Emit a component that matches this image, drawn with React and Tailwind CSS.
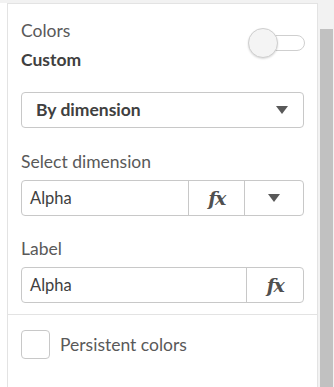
import React from 'react';

const Caret = () => (
  <svg width="12" height="8" viewBox="0 0 12 8" className="fill-[#595959]">
    <path d="M0 0 L12 0 L6 8 Z" />
  </svg>
);

const Fx = () => (
  <span className="font-['DejaVu_Serif',serif] italic font-bold text-[19px] leading-none text-[#505050] tracking-[-1.5px]">
    fx
  </span>
);

const App = () => {
  return (
    <div className="flex h-[387px] w-[334px] overflow-hidden bg-[#f2f2f2] font-['Lato',sans-serif]">
      <div className="flex w-[318px] flex-col pt-[3px]">
        <div className="flex flex-1 bg-white pl-[7px]">
          <div className="flex flex-1 flex-col border-l border-r border-t border-[#e3e3e3]">
            <div className="px-[13px] pt-[17px] pb-[11px]">
              <div className="flex justify-between">
                <div className="flex flex-col gap-[9px]">
                  <span className="text-[17.5px] leading-5 text-[#595959]">Colors</span>
                  <span className="text-[17.5px] font-bold leading-5 text-[#404040]">Custom</span>
                </div>
                <div className="relative mr-[-1px] mt-[7px] h-[30px] w-[57px]">
                  <div className="absolute left-[4px] top-[7px] h-[16px] w-[53px] rounded-full border border-[#cfcfcf] bg-white" />
                  <div className="absolute left-0 top-0 h-[30px] w-[30px] rounded-full border border-[#cfcfcf] bg-[#f4f4f4] shadow-[0_1px_2px_rgba(0,0,0,0.15)]" />
                </div>
              </div>

              <div className="mt-[22px] flex h-[36px] items-center justify-between rounded-[4px] border border-[#c8c8c8] pl-[14px] pr-[15px]">
                <span className="text-[17.5px] font-bold text-[#404040]">By dimension</span>
                <Caret />
              </div>

              <div className="mt-[24px] text-[17.5px] leading-5 text-[#595959]">Select dimension</div>
              <div className="mt-[8px] flex h-[36px] rounded-[4px] border border-[#c8c8c8]">
                <div className="flex flex-1 items-center pl-[8px] text-[16.5px] text-[#404040]">Alpha</div>
                <div className="flex w-[56px] items-center justify-center border-l border-[#c8c8c8]"><Fx /></div>
                <div className="flex w-[59px] items-center justify-center border-l border-[#c8c8c8]"><Caret /></div>
              </div>

              <div className="mt-[23px] text-[17.5px] leading-5 text-[#595959]">Label</div>
              <div className="mt-[8px] flex h-[36px] rounded-[4px] border border-[#c8c8c8]">
                <div className="flex flex-1 items-center pl-[8px] text-[16.5px] text-[#404040]">Alpha</div>
                <div className="flex w-[57px] items-center justify-center border-l border-[#c8c8c8]"><Fx /></div>
              </div>
            </div>

            <div className="flex items-center gap-[10px] border-t border-[#e3e3e3] px-[13px] pt-[15px]">
              <div className="h-[29px] w-[29px] rounded-[4px] border border-[#c8c8c8] bg-white" />
              <span className="pt-[2px] text-[17.5px] text-[#595959]">Persistent colors</span>
            </div>
          </div>
        </div>
      </div>
      <div className="flex w-[16px] flex-col pl-[2px] pr-[1px] pt-[29px]">
        <div className="flex-1 bg-[#c1c1c1]" />
      </div>
    </div>
  );
};

export default App;
